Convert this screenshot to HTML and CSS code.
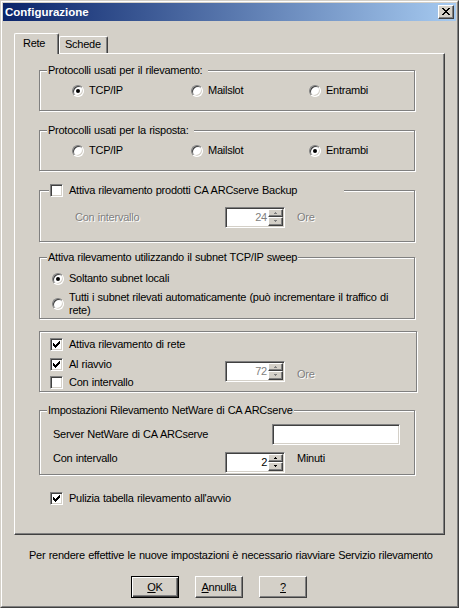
FILE: index.html
```html
<!DOCTYPE html>
<html lang="it">
<head>
<meta charset="utf-8">
<title>Configurazione</title>
<link rel="stylesheet" href="styles.css">
</head>
<body>
<div class="window">
  <div class="frame">
    <div class="titlebar">
      <span class="title">Configurazione</span>
      <span class="close"><svg width="8" height="7" viewBox="0 0 8 7" shape-rendering="crispEdges"><path d="M0 0h2v1h1v1h2V1h1V0h2v1H7v1H6v1H5v1h1v1h1v1h1v1H6V6H5V5H3v1H2v1H0V6h1V5h1V4h1V3H2V2H1V1H0z" fill="#000"/></svg></span>
    </div>
    <div class="content">
      <div class="tabs">
        <div class="tab active">Rete</div>
        <div class="tab inactive">Schede</div>
      </div>
      <div class="panel">
        <div class="group g1">
          <div class="legend lg-pad">Protocolli usati per il rilevamento:</div>
          <div class="radio-row">
            <div class="opt ropt"><span class="radio on"></span>TCP/IP</div>
            <div class="opt ropt"><span class="radio"></span>Mailslot</div>
            <div class="opt ropt"><span class="radio"></span>Entrambi</div>
          </div>
        </div>

        <div class="group g2">
          <div class="legend lg-pad">Protocolli usati per la risposta:</div>
          <div class="radio-row">
            <div class="opt ropt"><span class="radio"></span>TCP/IP</div>
            <div class="opt ropt"><span class="radio"></span>Mailslot</div>
            <div class="opt ropt"><span class="radio on"></span>Entrambi</div>
          </div>
        </div>

        <div class="group g3">
          <div class="legend lg-chk"><span class="check"></span>Attiva rilevamento prodotti CA ARCserve Backup</div>
          <div class="g3-row">
            <span class="dis g3-label">Con intervallo</span>
            <div class="spin disabled">
              <span class="spin-val">24</span>
              <span class="spin-btns">
                <span class="sb up"><svg width="3" height="2" viewBox="0 0 3 2" shape-rendering="crispEdges"><path d="M1 0h1v1h1v1H0V1h1z"/></svg></span>
                <span class="sb dn"><svg width="3" height="2" viewBox="0 0 3 2" shape-rendering="crispEdges"><path d="M0 0h3v1H2v1H1V1H0z"/></svg></span>
              </span>
            </div>
            <span class="dis unit">Ore</span>
          </div>
        </div>

        <div class="group g4">
          <div class="legend lg-tight">Attiva rilevamento utilizzando il subnet TCP/IP sweep</div>
          <div class="opt ropt g4-r1"><span class="radio on"></span>Soltanto subnet locali</div>
          <div class="opt ropt g4-r2"><span class="radio"></span><span class="two">Tutti i subnet rilevati automaticamente (può incrementare il traffico di<br>rete)</span></div>
        </div>

        <div class="group g5">
          <div class="g5-body">
            <div class="checks">
              <div class="opt copt"><span class="check"><svg width="7" height="7" viewBox="0 0 7 7" shape-rendering="crispEdges"><path d="M6 0h1v3H6v1H5v1H4v1H3v1H2V6H1V5H0V2h1v1h1v1h1V3h1V2h1V1h1z"/></svg></span>Attiva rilevamento di rete</div>
              <div class="opt copt c2"><span class="check"><svg width="7" height="7" viewBox="0 0 7 7" shape-rendering="crispEdges"><path d="M6 0h1v3H6v1H5v1H4v1H3v1H2V6H1V5H0V2h1v1h1v1h1V3h1V2h1V1h1z"/></svg></span>Al riavvio</div>
              <div class="opt copt c3"><span class="check"></span>Con intervallo</div>
            </div>
            <div class="spin disabled s72">
              <span class="spin-val">72</span>
              <span class="spin-btns">
                <span class="sb up"><svg width="3" height="2" viewBox="0 0 3 2" shape-rendering="crispEdges"><path d="M1 0h1v1h1v1H0V1h1z"/></svg></span>
                <span class="sb dn"><svg width="3" height="2" viewBox="0 0 3 2" shape-rendering="crispEdges"><path d="M0 0h3v1H2v1H1V1H0z"/></svg></span>
              </span>
            </div>
            <span class="dis unit ore72">Ore</span>
          </div>
        </div>

        <div class="group g6">
          <div class="legend lg-tight">Impostazioni Rilevamento NetWare di CA ARCserve</div>
          <div class="g6-row1">
            <span class="g6-l1">Server NetWare di CA ARCserve</span>
            <span class="edit"></span>
          </div>
          <div class="g6-row2">
            <span class="g6-l2">Con intervallo</span>
            <div class="spin">
              <span class="spin-val">2</span>
              <span class="spin-btns">
                <span class="sb up"><svg width="3" height="2" viewBox="0 0 3 2" shape-rendering="crispEdges"><path d="M1 0h1v1h1v1H0V1h1z"/></svg></span>
                <span class="sb dn"><svg width="3" height="2" viewBox="0 0 3 2" shape-rendering="crispEdges"><path d="M0 0h3v1H2v1H1V1H0z"/></svg></span>
              </span>
            </div>
            <span class="unit">Minuti</span>
          </div>
        </div>

        <div class="opt copt pulizia"><span class="check"><svg width="7" height="7" viewBox="0 0 7 7" shape-rendering="crispEdges"><path d="M6 0h1v3H6v1H5v1H4v1H3v1H2V6H1V5H0V2h1v1h1v1h1V3h1V2h1V1h1z"/></svg></span>Pulizia tabella rilevamento all'avvio</div>
      </div>

      <div class="msg">Per rendere effettive le nuove impostazioni è necessario riavviare Servizio rilevamento</div>

      <div class="buttons">
        <div class="btn default"><u>O</u>K</div>
        <div class="btn"><u>A</u>nnulla</div>
        <div class="btn"><u>?</u></div>
      </div>
    </div>
  </div>
</div>
</body>
</html>
```

FILE: styles.css
```css
html, body {
  margin: 0;
  padding: 0;
  background: #d4d0c8;
}

body {
  font-family: "Liberation Sans", Arial, sans-serif;
  font-size: 11px;
  line-height: 13px;
  letter-spacing: -0.25px;
  word-spacing: 0.5px;
  color: #000;
}

.window {
  width: 459px;
  height: 608px;
  box-sizing: border-box;
  border: 1px solid;
  border-color: #d4d0c8 #404040 #404040 #d4d0c8;
  background: #d4d0c8;
}

.frame {
  height: 100%;
  box-sizing: border-box;
  border: 1px solid;
  border-color: #fff #808080 #808080 #fff;
  padding: 1px;
}

.titlebar {
  height: 18px;
  display: flex;
  align-items: center;
  justify-content: space-between;
  padding: 0 2px;
  background: linear-gradient(90deg, #0a246a 0%, #a6caf0 100%);
}

.title {
  color: #fff;
  font-weight: bold;
  font-size: 11.5px;
  line-height: 13px;
  letter-spacing: 0;
}

.close {
  width: 16px;
  height: 14px;
  box-sizing: border-box;
  display: flex;
  align-items: center;
  justify-content: center;
  background: #d4d0c8;
  border: 1px solid;
  border-color: #fff #404040 #404040 #fff;
  box-shadow: inset -1px -1px 0 #808080;
  padding: 0 1px 1px 0;
}

.close svg { display: block; }

.content {
  padding: 12px 0 0 11px;
}

.tabs {
  display: flex;
  align-items: flex-end;
  height: 20px;
}

.tab {
  box-sizing: border-box;
  background: #d4d0c8;
  border-left: 1px solid #fff;
  border-top: 1px solid #fff;
  border-right: 1px solid #404040;
  box-shadow: inset -1px 0 0 #808080;
  border-top-left-radius: 2px;
  border-top-right-radius: 2px;
}

.tab.active {
  width: 45px;
  height: 21px;
  margin-bottom: -1px;
  padding: 3px 0 0 8px;
  position: relative;
  z-index: 1;
}

.tab.inactive {
  width: 49px;
  height: 17px;
  padding: 1px 0 0 5px;
}

.panel {
  width: 431px;
  height: 482px;
  box-sizing: border-box;
  border: 1px solid;
  border-color: #fff #404040 #404040 #fff;
  box-shadow: inset -1px -1px 0 #808080;
  padding-top: 16px;
}

.group {
  margin-left: 24px;
  width: 376px;
  box-sizing: border-box;
  border: 1px solid #808080;
  box-shadow: inset 1px 1px 0 #fff, 1px 1px 0 #fff;
}

.g1 { height: 41px; }
.g2 { height: 41px; margin-top: 19px; }
.g3 { height: 52px; margin-top: 19px; }
.g4 { height: 62px; margin-top: 15px; }
.g5 { height: 61px; margin-top: 12px; width: 378px; }
.g6 { height: 65px; margin-top: 18px; }

.legend {
  width: fit-content;
  margin-top: -7px;
  background: #d4d0c8;
  height: 13px;
  white-space: nowrap;
}

.lg-pad { margin-left: 7px; padding: 0 6px 0 1px; }
.lg-tight { margin-left: 7px; padding: 0 1px 0 1px; }
.lg-chk {
  margin-left: 9px;
  padding: 0 47px 0 1px;
  display: flex;
  align-items: center;
  gap: 6px;
}

.opt {
  display: flex;
  align-items: center;
  height: 13px;
  white-space: nowrap;
}

.ropt { gap: 5px; }
.copt { gap: 6px; }

.radio-row {
  display: grid;
  grid-template-columns: 119px 118px auto;
  padding-left: 32px;
  margin-top: 7px;
}

.radio {
  flex: none;
  position: relative;
  width: 12px;
  height: 12px;
  box-sizing: border-box;
  border-radius: 50%;
  background: #fff;
  border: 1px solid;
  border-color: #808080 #fff #fff #808080;
  box-shadow: inset 1px 1px 0 #404040, inset -1px -1px 0 #d4d0c8;
}

.radio.on::after {
  content: "";
  position: absolute;
  left: 3px;
  top: 3px;
  width: 4px;
  height: 4px;
  border-radius: 50%;
  background: #000;
}

.check {
  flex: none;
  width: 13px;
  height: 13px;
  box-sizing: border-box;
  background: #fff;
  border: 1px solid;
  border-color: #808080 #fff #fff #808080;
  box-shadow: inset 1px 1px 0 #404040, inset -1px -1px 0 #d4d0c8;
  display: flex;
  align-items: center;
  justify-content: center;
}

.check svg { display: block; fill: #000; }

.dis {
  color: #808080;
  text-shadow: 1px 1px 0 #fff;
}

.g3-row {
  display: flex;
  align-items: center;
  padding-left: 35px;
  margin-top: 10px;
}

.g3-label { width: 150px; flex: none; }

.unit { margin-left: 12px; }

.spin {
  flex: none;
  width: 60px;
  height: 21px;
  box-sizing: border-box;
  display: flex;
  padding: 1px;
  background: #fff;
  border: 1px solid;
  border-color: #808080 #fff #fff #808080;
  box-shadow: inset 1px 1px 0 #404040, inset -1px -1px 0 #d4d0c8;
}

.spin-val {
  flex: 1;
  text-align: right;
  line-height: 17px;
  padding-right: 1px;
}

.spin.disabled .spin-val { color: #808080; }

.spin-btns {
  width: 15px;
  display: flex;
  flex-direction: column;
}

.sb {
  box-sizing: border-box;
  display: flex;
  align-items: center;
  justify-content: center;
  background: #d4d0c8;
  border: 1px solid;
  border-color: #fff #404040 #404040 #fff;
  box-shadow: inset -1px -1px 0 #808080;
  padding: 0 1px 1px 0;
}

.sb.up { height: 8px; }
.sb.dn { height: 9px; }

.sb svg { display: block; fill: #000; }
.spin.disabled .sb svg { fill: #808080; }

.g4-r1 {
  padding-left: 12px;
  margin-top: 8px;
}

.g4-r2 {
  padding-left: 12px;
  margin-top: 6px;
  height: 26px;
}

.two { line-height: 13px; }

.g5-body {
  display: flex;
  align-items: flex-start;
  padding: 6px 0 0 10px;
}

.checks {
  width: 175px;
  flex: none;
  display: flex;
  flex-direction: column;
}

.c2 { margin-top: 7px; }
.c3 { margin-top: 5px; }

.s72 { margin-top: 23px; }
.ore72 { margin-top: 30px; }

.g6-row1 {
  display: flex;
  align-items: center;
  padding-left: 13px;
  margin-top: 7px;
}

.g6-l1 { width: 219px; flex: none; }

.edit {
  width: 128px;
  height: 21px;
  box-sizing: border-box;
  background: #fff;
  border: 1px solid;
  border-color: #808080 #fff #fff #808080;
  box-shadow: inset 1px 1px 0 #404040, inset -1px -1px 0 #d4d0c8;
}

.g6-row2 {
  display: flex;
  align-items: flex-start;
  padding-left: 13px;
  margin-top: 7px;
}

.g6-l2 { width: 172px; flex: none; }

.pulizia {
  margin: 17px 0 0 35px;
}

.msg {
  margin-top: 14px;
  padding-left: 15px;
  white-space: nowrap;
}

.buttons {
  display: flex;
  gap: 16px;
  padding-left: 117px;
  margin-top: 14px;
}

.btn {
  width: 48px;
  height: 22px;
  box-sizing: border-box;
  display: flex;
  align-items: center;
  justify-content: center;
  border: 1px solid;
  border-color: #fff #404040 #404040 #fff;
  box-shadow: inset -1px -1px 0 #808080;
}

.btn.default {
  border-color: #000;
  box-shadow: inset 1px 1px 0 #fff, inset -1px -1px 0 #404040, inset -2px -2px 0 #808080;
}

.btn u { text-decoration: underline; }
```
